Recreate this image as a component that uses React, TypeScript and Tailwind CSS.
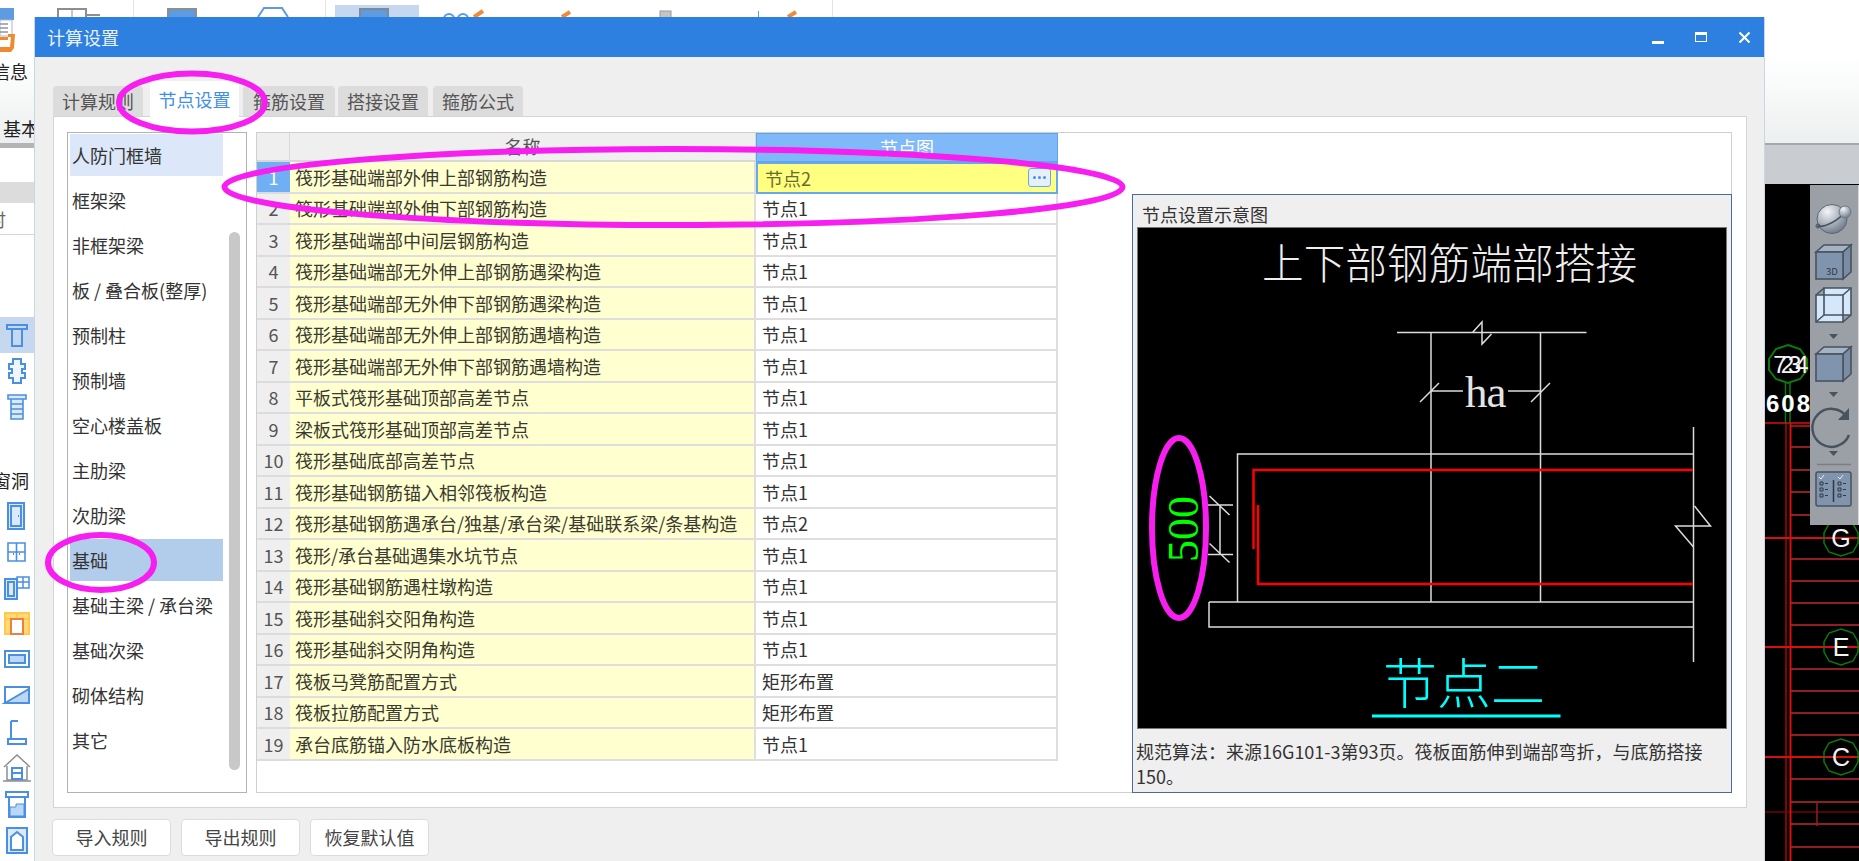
const font = { fontFamily: '"Noto Sans CJK SC", "Liberation Sans", sans-serif' };

const categories = ["人防门框墙", "框架梁", "非框架梁", "板 / 叠合板(整厚)", "预制柱", "预制墙", "空心楼盖板", "主肋梁", "次肋梁", "基础", "基础主梁 / 承台梁", "基础次梁", "砌体结构", "其它"];

const tabs = [
  { label: "计算规则", cls: "w-[90px] mr-[7px]" },
  { label: "节点设置", cls: "" },
  { label: "箍筋设置", cls: "w-[92px] ml-[4px] mr-[3px]" },
  { label: "搭接设置", cls: "w-[90px] mr-[5px]" },
  { label: "箍筋公式", cls: "w-[90px]" },
];

const rows = [
  { name: "筏形基础端部外伸上部钢筋构造", value: "节点2" },
  { name: "筏形基础端部外伸下部钢筋构造", value: "节点1" },
  { name: "筏形基础端部中间层钢筋构造", value: "节点1" },
  { name: "筏形基础端部无外伸上部钢筋遇梁构造", value: "节点1" },
  { name: "筏形基础端部无外伸下部钢筋遇梁构造", value: "节点1" },
  { name: "筏形基础端部无外伸上部钢筋遇墙构造", value: "节点1" },
  { name: "筏形基础端部无外伸下部钢筋遇墙构造", value: "节点1" },
  { name: "平板式筏形基础顶部高差节点", value: "节点1" },
  { name: "梁板式筏形基础顶部高差节点", value: "节点1" },
  { name: "筏形基础底部高差节点", value: "节点1" },
  { name: "筏形基础钢筋锚入相邻筏板构造", value: "节点1" },
  { name: "筏形基础钢筋遇承台/独基/承台梁/基础联系梁/条基构造", value: "节点2" },
  { name: "筏形/承台基础遇集水坑节点", value: "节点1" },
  { name: "筏形基础钢筋遇柱墩构造", value: "节点1" },
  { name: "筏形基础斜交阳角构造", value: "节点1" },
  { name: "筏形基础斜交阴角构造", value: "节点1" },
  { name: "筏板马凳筋配置方式", value: "矩形布置" },
  { name: "筏板拉筋配置方式", value: "矩形布置" },
  { name: "承台底筋锚入防水底板构造", value: "节点1" },
];

const blue = "#4a90e2";

function Glyph({ children }: { children: React.ReactNode }) {
  return (
    <svg width="34" height="36" viewBox="0 0 34 36" fill="none" stroke={blue} strokeWidth="2">
      {children}
    </svg>
  );
}

const sideIcons = [
  <Glyph><path d="M7 8h20v4H7zM12 12v17h10V12" /></Glyph>,
  <Glyph><path d="M13 6h8v5h4v5h-3v4h3v5h-4v5h-8v-5H9v-5h3v-4H9v-5h4z" fill="#eef5fd" /></Glyph>,
  <Glyph><path d="M8 6h18v4H8zM11 10h12v20H11zM11 15h12M11 20h12M11 25h12" strokeWidth="1.6" fill="#dbe9fa" /></Glyph>,
];

const lowerIcons = [
  <Glyph><path d="M8 5h16v26H8zM11 8h10v20H11z" fill="#dbe9fa" /><path d="M18 18h1" /></Glyph>,
  <Glyph><path d="M8 9h17v18H8zM16.500 9v18M8 18h17" strokeWidth="1.6" /><path d="M13 20h1M19 20h1" /></Glyph>,
  <Glyph><path d="M5 9h12v20H5zM8 12h6v14H8z" fill="#dbe9fa" /><path d="M17 7h12v11H17zM23 7v11M17 12h12" strokeWidth="1.5" /></Glyph>,
  <Glyph><path d="M5 7h24v21H5z" fill="#ffd978" stroke="#ffc94a" /><path d="M5 13h24M17 7v6" stroke="#ffc94a" /><path d="M11 13h12v15H11z" fill="#fff" stroke="#ef7f3c" /></Glyph>,
  <Glyph><path d="M5 9h24v16H5z" /><path d="M9 13h16v8H9z" fill="#bcd7f6" /></Glyph>,
  <Glyph><path d="M5 9h24v16H5z" /><path d="M5 25 29 11v14z" fill="#bcd7f6" /></Glyph>,
  <Glyph><path d="M11 7h7M11 7v18M8 25h18v5H8z" /></Glyph>,
  <Glyph><path d="M4 17 17 5l13 12M7 16v14h20V16" stroke="#8b8f94" strokeWidth="1.5" /><path d="M3 31h28" stroke="#8b8f94" strokeWidth="1.5" /><path d="M12 18h10v11H12zM12 23h10" /></Glyph>,
  <Glyph><path d="M6 6h22v5H6zM9 11v20h16V11" /><path d="M10 30V21h6v-3h8v12z" fill="#bcd7f6" strokeWidth="1" /></Glyph>,
  <Glyph><path d="M7 6h20v25H7z" fill="#dbe9fa" /><path d="M11 28V15l6-5 6 5v13z" fill="#fff" /></Glyph>,
];

function Cube({ y, front, children }: { y: number; front: string; children?: React.ReactNode }) {
  return (
    <g stroke="#47535f" strokeWidth="1.6" transform={`translate(1816 ${y})`}>
      <path d="M0 7 8 0h27l-8 7z" fill="#a6b3c5" />
      <path d="M27 7l8-7v27l-8 7z" fill="#7a8ba3" />
      <rect x="0" y="7" width="27" height="27" fill={front} />
      {children}
    </g>
  );
}

// right hand view toolbar, drawn in page coordinates
function ViewToolbar() {
  return (
    <svg width="49" height="340" viewBox="1810 185 49 340" fill="none">
      <defs>
        <radialGradient id="ball" cx="35%" cy="25%" r="80%">
          <stop offset="0%" stopColor="#f4f6f8" />
          <stop offset="100%" stopColor="#6c7888" />
        </radialGradient>
      </defs>
      <ellipse cx="1832" cy="219" rx="15" ry="14.500" fill="url(#ball)" stroke="#5c6672" />
      <path d="M1817 226c8 2 22-6 28-14" stroke="#47535f" strokeWidth="1.5" />
      <circle cx="1818" cy="226" r="2" stroke="#47535f" />
      <circle cx="1845" cy="212" r="6" fill="url(#ball)" stroke="#6c7888" />
      <Cube y={245} front="#8094ad">
        <text x="10" y="30" fontSize="9.500" fill="#2f3843" stroke="none" style={font}>3D</text>
      </Cube>
      <g stroke="#47535f" strokeWidth="1.6" transform="translate(1816 288)">
        <path d="M0 7h27v27H0zM8 0h27v27H8z" fill="#d5e7fb" />
        <path d="M0 7 8 0M27 7l8-7M27 34l8-7M0 34l8-7" />
      </g>
      <path d="M1829 334h9l-4.500 5z" fill="#47535f" />
      <Cube y={347} front="#8094ad" />
      <path d="M1829 392h9l-4.500 5z" fill="#47535f" />
      <path d="M1847 417a19 19 0 1 0 2 18" stroke="#47535f" strokeWidth="2.500" />
      <path d="M1849 408v12h-11z" fill="#47535f" />
      <path d="M1829 451h9l-4.500 5z" fill="#47535f" />
      <path d="M1817 464.500h34" stroke="#7b7f85" strokeWidth="1.5" />
      <rect x="1816" y="472" width="35" height="34" rx="2" fill="#8094ad" stroke="#47535f" strokeWidth="1.5" />
      <path d="M1833.500 480v22" stroke="#2f3843" strokeWidth="1.5" />
      <g stroke="#2f3843" strokeWidth="1">
        <path d="M1820 482h3v3h-3zM1820 488h3v3h-3zM1820 494h3v3h-3zM1825 483.500h3M1825 489.500h3M1825 495.500h3" />
        <path d="M1838 482h3v3h-3zM1838 488h3v3h-3zM1838 494h3v3h-3zM1843 483.500h3M1843 489.500h3M1843 495.500h3" />
      </g>
      <path d="M1819 477l2 2 3-4M1838 477l2 2 3-4" stroke="#e6edf5" />
    </svg>
  );
}

// CAD drawing area right of the dialog, page coordinates
function CadView() {
  const ticks = [447, 470, 492, 515, 559, 581, 603, 625, 669, 691, 713, 735, 779, 802, 824, 847];
  const axes = [
    { y: 538, label: "G" },
    { y: 647, label: "E" },
    { y: 757, label: "C" },
    { y: 880, label: "A" },
  ];
  return (
    <svg width="94" height="677" viewBox="1765 184 94 677" fill="none" className="block">
      {ticks.map((y) => (
        <path key={y} d={`M1791 ${y}H1859`} stroke="#8f2020" strokeWidth="2" />
      ))}
      <path d="M1791 812H1859M1765 812h26" stroke="#6e0606" strokeWidth="1.5" />
      <path d="M1817 802v24" stroke="#8f2020" strokeWidth="1.500" />
      <path d="M1786 423V861" stroke="#7c0505" strokeWidth="2" />
      <path d="M1790.500 423V861" stroke="#d80f0f" strokeWidth="2" />
      <path d="M1765 423h45M1791 426h19" stroke="#d80f0f" strokeWidth="1.500" />
      <path d="M1785.500 383v40M1790 383v40" stroke="#0b7a0b" strokeWidth="1.500" />
      <polygon points="1788,345 1800,349 1807,359 1807,370 1800,379 1788,383 1776,379 1769,370 1769,359 1776,349" stroke="#0b7a0b" strokeWidth="2" />
      <text x="1788" y="373" textAnchor="middle" fontSize="24" fill="#f4f4f4" stroke="none" style={{ fontFamily: '"Liberation Sans", sans-serif' }} letterSpacing="-6">7234</text>
      <text x="1766" y="412" fontSize="24" fontWeight="700" fill="#fff" style={{ fontFamily: '"Liberation Sans", sans-serif' }} letterSpacing="2">608</text>
      {axes.map(({ y, label }) => (
        <g key={label}>
          <path d={`M1765 ${y}H1859`} stroke="#d80f0f" strokeWidth="2" />
          <polygon
            points={`1841,${y - 18} 1853,${y - 14} 1858,${y - 5} 1858,${y + 5} 1853,${y + 14} 1841,${y + 18} 1829,${y + 14} 1824,${y + 5} 1824,${y - 5} 1829,${y - 14}`}
            stroke="#0b7a0b"
            strokeWidth="1.500"
          />
          <text x="1841" y={y + 9} textAnchor="middle" fontSize="25" fill="#f2f2f2" style={{ fontFamily: '"Liberation Sans", sans-serif' }}>{label}</text>
        </g>
      ))}
    </svg>
  );
}

// bits of the ribbon that stick out above the dialog
function RibbonIcons() {
  return (
    <svg width="840" height="17" viewBox="0 0 840 17" fill="none" className="block">
      <path d="M133.500 0v17M325.500 0v17M832.500 0v17" stroke="#e3e3e3" />
      <path d="M58 17V9h28v8M86 15h14" stroke="#8e8e8e" strokeWidth="2" />
      <path d="M72 9v8" stroke="#8e8e8e" />
      <rect x="168" y="9" width="28" height="12" fill="#5f9be0" stroke="#8e8e8e" strokeWidth="2" />
      <path d="M258 17l6-9h18l6 9" stroke="#5f9be0" strokeWidth="2" />
      <rect x="335" y="5" width="84" height="12" fill="#c6d8ef" />
      <rect x="360" y="9" width="28" height="12" fill="#5f9be0" stroke="#808a96" strokeWidth="2" />
      <circle cx="449" cy="19" r="5" stroke="#5f9be0" strokeWidth="2" />
      <circle cx="463" cy="19" r="5" stroke="#5f9be0" strokeWidth="2" />
      <path d="M474 17l9-6" stroke="#ef8a3c" strokeWidth="4" />
      <path d="M562 17l8-5" stroke="#ef8a3c" strokeWidth="4" />
      <rect x="660" y="11" width="11" height="8" fill="#c4c4c4" stroke="#9a9a9a" />
      <path d="M758.500 11v6" stroke="#5f9be0" />
      <path d="M788 17l8-5" stroke="#ef8a3c" strokeWidth="4" />
    </svg>
  );
}

function NodeDiagram() {
  const serif = { fontFamily: '"Liberation Serif", "Noto Sans CJK SC", serif', fontWeight: 300 };
  return (
    <svg width="588" height="500" viewBox="1138 228 588 500" fill="none" className="block">
      <rect x="1138" y="228" width="588" height="500" fill="#000" />
      <text x="1262" y="279" fontSize="41.700" fill="#eee" style={serif}>上下部钢筋端部搭接</text>
      <g stroke="#dcdcdc" strokeWidth="1.500">
        <path d="M1397 332.500H1586.500M1472.500 332.500 1482 322v22l9.500-10" />
        <path d="M1431 332.500V602M1540.500 332.500V602" />
        <path d="M1431 391h32M1508 391h32.500M1420 402l19-19M1531 402l19-19" />
        <path d="M1693.500 427V662M1237.500 602V454H1693.500" />
        <path d="M1209 602H1693.500M1209 602v25H1693.500" />
        <path d="M1694.500 506l16 20h-35l18 21" />
        <path d="M1208 505h25M1208 554.500h25M1220 505v49.500M1209.500 496l20 19M1209.500 543.500l20 19" />
      </g>
      <text x="1465" y="407" fontSize="45" fill="#e4e4e4" style={serif} letterSpacing="-1">ha</text>
      <path d="M1693 470H1253.500V549" stroke="#ff0000" strokeWidth="2.500" />
      <path d="M1258 505V584H1693" stroke="#ff0000" strokeWidth="2.500" />
      <text transform="translate(1198 562) rotate(-90)" fontSize="44" fill="#00ff00" style={serif}>500</text>
      <text x="1383" y="704" fontSize="54" fill="#00ffff" style={serif}>节点二</text>
      <path d="M1372 716H1560.500" stroke="#00ffff" strokeWidth="3" />
    </svg>
  );
}

export default function App() {
  return (
    <div className="relative w-[1859px] h-[861px] overflow-hidden bg-white text-[18px] text-[#333]" style={font}>
      {/* background application */}
      <div className="flex flex-col h-full">
        <div className="h-[143px] relative bg-linear-to-b from-white from-40% to-[#edf0f0]">
          <RibbonIcons />
          <div className="flex flex-col">
            <svg width="30" height="45" viewBox="0 0 30 45" fill="none" className="mt-[-9px] block">
              <path d="M0 0h14v12H0z" fill="#5f9be0" />
              <path d="M0 12h12v16H0z" fill="#fff" stroke="#a9b7c6" />
              <path d="M0 16h8M0 20h8M0 24h8" stroke="#8a97a5" strokeWidth="1.500" />
              <path d="M0 29h8v-3h7l-1 14-3 4H0z" fill="#f08a2e" />
              <path d="M0 32h8V29h3l-1 10H0z" fill="#fff" />
            </svg>
            <span className="ml-[-8px] leading-[24px] mt-[6px] text-[#222]">信息</span>
            <span className="ml-[3px] leading-[24px] mt-[33px] text-[#222]">基本</span>
          </div>
        </div>
        <div className="flex flex-1 min-h-0">
          <aside className="w-[150px] flex flex-col">
            <div className="h-[5px] bg-[#b4b4b4]" />
            <div className="h-[34px]" />
            <div className="h-[21px] bg-[#dcdcdc]" />
            <div className="h-[32px] border-b border-[#d6d6d6] leading-[32px] text-[#666]">
              <span className="ml-[-12px]">时</span>
            </div>
            <div className="h-[82px]" />
            <div className="h-9 w-[34px] bg-[#c6d8ef]">{sideIcons[0]}</div>
            <div className="h-9 w-[34px]">{sideIcons[1]}</div>
            <div className="h-9 w-[34px]">{sideIcons[2]}</div>
            <div className="h-[37px]" />
            <div className="h-9 leading-[36px] ml-[-7px] text-[#222]">窗洞</div>
            {lowerIcons.map((icon, i) => (
              <div key={i} className="h-9 w-[34px]">{icon}</div>
            ))}
          </aside>
          <div className="flex-1" />
          <div className="w-[94px] flex flex-col">
            <div className="h-[41px] shrink-0 bg-[#c9ccd0] border-t-2 border-[#a8a8a8]" />
            <div className="relative flex-1 bg-black">
              <CadView />
              <div className="absolute top-[1px] right-0 w-[49px] h-[340px] bg-[#9b9fa6] border-r border-[#d8d8d8]">
                <ViewToolbar />
              </div>
            </div>
          </div>
        </div>
      </div>

      {/* dialog window */}
      <div className="absolute left-[34px] top-[17px] w-[1731px] h-[844px] bg-[#efefef] flex flex-col border-l border-r border-[#c9d6e6]">
        <div className="h-[40px] shrink-0 bg-[#2d7fe0] flex items-center text-white pl-[12px]">
          <span className="flex-1 text-[#e9f2fc]">计算设置</span>
          <div className="flex items-center gap-[31px] pr-[13px]">
            <span className="w-[12px] h-[3px] mt-[10px] bg-white" />
            <span className="w-[12px] h-[10px] border border-white border-t-[3px]" />
            <svg width="13" height="13" viewBox="0 0 13 13" stroke="#fff" strokeWidth="2"><path d="M1.500 1.500l10 10M11.500 1.500l-10 10" /></svg>
          </div>
        </div>

        <div className="h-[59px] shrink-0 flex items-end pl-[18px]">
          {tabs.map((t, i) =>
            i === 1 ? (
              <div key={t.label} className="w-[89px] h-[36px] bg-white text-[#3f8fe6] flex items-center justify-center rounded-t-[3px] relative top-[1px]">{t.label}</div>
            ) : (
              <div key={t.label} className={`h-[30px] bg-[#dcdcdc] text-[#555] flex items-center justify-center rounded-t-[4px] ${t.cls}`}>{t.label}</div>
            )
          )}
        </div>

        <div className="ml-[18px] w-[1694px] h-[692px] shrink-0 bg-white border border-[#d4d4d4] flex pl-[13px] pt-[15px]">
          {/* category list */}
          <div className="relative w-[180px] h-[661px] shrink-0 border border-[#b2b2b2] pl-[2px] pt-[1px]">
            {categories.map((c, i) => (
              <div key={c} className="h-[45px] flex">
                <div className={`w-[153px] h-[42px] flex items-center pl-[2px] ${i === 0 ? "bg-[#dce8f9]" : i === 9 ? "bg-[#b2cdec]" : ""}`}>
                  <span className="whitespace-nowrap">{c}</span>
                </div>
              </div>
            ))}
            <div className="absolute left-[161px] top-[99px] w-[11px] h-[538px] rounded-full bg-[#c8c8c8]" />
          </div>

          {/* node table and picture */}
          <div className="ml-[9px] w-[1476px] h-[661px] shrink-0 border border-[#cfcfcf] flex items-start">
            <div className="w-[801px] shrink-0">
              <div className="grid grid-cols-[33px_466px_302px] h-[29px]">
                <div className="bg-[#efefef] border-b-2 border-r border-[#d8d8d8]" />
                <div className="bg-[#efefef] border-b-2 border-r border-[#d8d8d8] flex items-center justify-center text-[#555]">名称</div>
                <div className="bg-[#7fb9f9] border border-[#5fa5ee] flex items-center justify-center text-white">节点图</div>
              </div>
              {rows.map((r, i) => (
                <div key={i} className="grid grid-cols-[33px_466px_302px] h-[31.5px] leading-none">
                  <div className={`flex items-center justify-center border-b-2 border-[#dcdcdc] ${i === 0 ? "bg-[#6fb0f5] text-white" : "bg-[#efefef] text-[#555]"}`}>{i + 1}</div>
                  <div className="flex items-center pl-[5px] bg-[#ffffcf] border-b-2 border-r-2 border-[#dedede] whitespace-nowrap text-[#3a3a30]">{r.name}</div>
                  {i === 0 ? (
                    <div className="flex items-center pl-[7px] pr-[6px] bg-[#ffff80] border-2 border-[#66a8ee] text-[#6b6b30]">
                      <span className="flex-1">{r.value}</span>
                      <span className="w-[23px] h-[19px] rounded-[3px] bg-[#e6f0fa] border border-[#66a8ee] flex items-center justify-center gap-[2px] mr-[-1px]">
                        <i className="w-[3px] h-[3px] rounded-full bg-[#4a90e2]" />
                        <i className="w-[3px] h-[3px] rounded-full bg-[#4a90e2]" />
                        <i className="w-[3px] h-[3px] rounded-full bg-[#4a90e2]" />
                      </span>
                    </div>
                  ) : (
                    <div className="flex items-center pl-[6px] border-b-2 border-r-2 border-[#dedede]">{r.value}</div>
                  )}
                </div>
              ))}
            </div>

            <div className="ml-[74px] mt-[61px] mr-[-1px] w-[600px] h-[599px] shrink-0 bg-[#efefef] border border-[#4a6a9a]">
              <div className="h-[33px] pl-[9px] pt-[5px] flex items-center">节点设置示意图</div>
              <div className="ml-[5px] w-[588px] h-[500px] outline outline-[#777]">
                <NodeDiagram />
              </div>
              <div className="pl-[3px] pt-[11px] leading-[25px] whitespace-nowrap">
                规范算法：来源16G101-3第93页。筏板面筋伸到端部弯折，与底筋搭接
                <br />
                150。
              </div>
            </div>
          </div>
        </div>

        <div className="flex gap-[10px] pl-[17px] pt-[11px]">
          {["导入规则", "导出规则", "恢复默认值"].map((b) => (
            <button key={b} className="w-[119px] h-[37px] bg-white border border-[#dcdcdc] rounded-[4px] text-[#444]">{b}</button>
          ))}
        </div>
      </div>

      {/* hand drawn marker annotations on top of the screenshot */}
      <svg className="absolute inset-0 pointer-events-none" width="1859" height="861" fill="none" stroke="#f61ff0" strokeWidth="6">
        <ellipse cx="192" cy="102.500" rx="73" ry="29" />
        <ellipse cx="673.500" cy="187" rx="449" ry="38" />
        <ellipse cx="101" cy="562.500" rx="53" ry="27.500" />
        <ellipse cx="1179" cy="528" rx="27" ry="90" />
      </svg>
    </div>
  );
}
